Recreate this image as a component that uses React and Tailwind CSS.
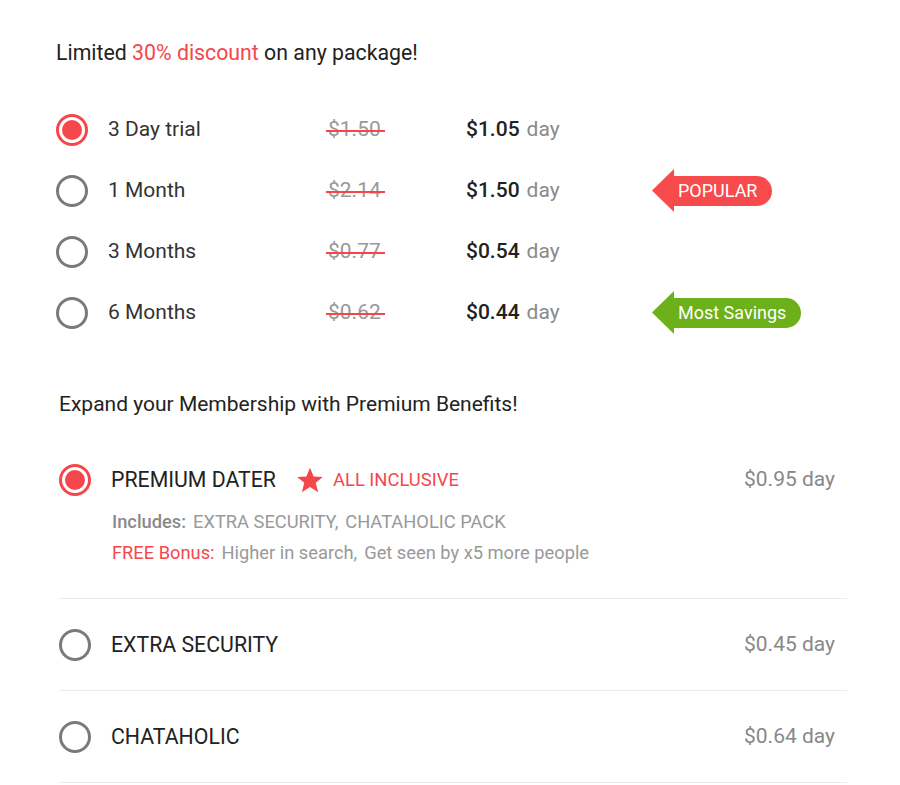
import React, { useState } from "react";

const plans = [
  { id: "trial", label: "3 Day trial", old: "$1.50", price: "$1.05" },
  { id: "1m", label: "1 Month", old: "$2.14", price: "$1.50", badge: "popular" },
  { id: "3m", label: "3 Months", old: "$0.77", price: "$0.54" },
  { id: "6m", label: "6 Months", old: "$0.62", price: "$0.44", badge: "savings" },
];

const extras = [
  { id: "extra", name: "EXTRA SECURITY", price: "$0.45" },
  { id: "chat", name: "CHATAHOLIC", price: "$0.64" },
];

// radio circle, red ring + dot when checked
const Radio = ({ checked }) =>
  checked ? (
    <span className="flex h-8 w-8 shrink-0 items-center justify-center rounded-full border-[3px] border-[#f5474b]">
      <span className="h-[20px] w-[20px] rounded-full bg-[#f5474b]" />
    </span>
  ) : (
    <span className="block h-8 w-8 shrink-0 rounded-full border-[3px] border-[#7a7a7a]" />
  );

const Badge = ({ text, color }) => (
  <div className="flex items-center">
    <svg width="22" height="43" viewBox="0 0 22 43" className="block">
      <polygon points="0,21.5 22,0 22,43" fill={color} />
    </svg>
    <div
      className="flex h-[30px] items-center rounded-r-full pl-[4px] pr-[15px] text-[18px] leading-none text-white"
      style={{ backgroundColor: color }}
    >
      {text}
    </div>
  </div>
);

const Star = () => (
  <svg width="28" height="27" viewBox="0 0 24 23" className="block">
    <polygon
      points="12,0.5 15.1,8 23,8.4 16.9,13.5 19,21.5 12,17 5,21.5 7.1,13.5 1,8.4 8.9,8"
      fill="#f5474b"
    />
  </svg>
);

export default function App() {
  const [plan, setPlan] = useState("trial");
  const [extra, setExtra] = useState("premium");

  return (
    <div className="min-h-[785px] w-[900px] bg-white px-[56px] pt-[39px] font-['Roboto',sans-serif]">
      <h1 className="text-[21.3px] leading-[28px] text-[#222]">
        Limited <span className="text-[#f5474b]">30% discount</span> on any package!
      </h1>

      {/* packages */}
      <div className="mt-[32px]">
        {plans.map((p) => (
          <div
            key={p.id}
            onClick={() => setPlan(p.id)}
            className="flex h-[61px] cursor-pointer items-center"
          >
            <Radio checked={plan === p.id} />
            <span className="ml-[20px] w-[220px] text-[21px] text-[#333]">{p.label}</span>
            <span className="w-[138px] text-[21px]">
              <span className="relative inline-block text-[#999]">
                {p.old}
                <span className="absolute left-[-2px] right-[-4px] top-1/2 h-[2px] bg-[#f5474b]" />
              </span>
            </span>
            <span className="w-[186px] text-[21px]">
              <span className="font-medium text-[#222]">{p.price}</span>
              <span className="ml-[7px] text-[#8a8a8a]">day</span>
            </span>
            {p.badge === "popular" && <Badge text="POPULAR" color="#f64a4c" />}
            {p.badge === "savings" && <Badge text="Most Savings" color="#6cb01a" />}
          </div>
        ))}
      </div>

      {/* premium benefits */}
      <div className="ml-[3px] mr-[-3px] mt-[47px]">
        <h2 className="text-[21px] leading-[28px] text-[#222]">
          Expand your Membership with Premium Benefits!
        </h2>

        <div
          onClick={() => setExtra("premium")}
          className="cursor-pointer border-b border-[#ebebeb] pb-[33px] pt-[46px]"
        >
          <div className="flex h-8 items-center">
            <Radio checked={extra === "premium"} />
            <span className="ml-[20px] text-[21.3px] text-[#222]">PREMIUM DATER</span>
            <span className="ml-[20px]">
              <Star />
            </span>
            <span className="ml-[9px] text-[18.4px] text-[#f5474b]">ALL INCLUSIVE</span>
            <span className="ml-auto mr-[12px] text-[21px] text-[#888]">$0.95 day</span>
          </div>
          <div className="ml-[53px] mt-[14px] text-[18.3px] leading-[24px] text-[#999]">
            <span className="mr-[7px] font-medium text-[#8a8a8a]">Includes:</span>
            EXTRA SECURITY,<span className="ml-[7px]">CHATAHOLIC PACK</span>
          </div>
          <div className="ml-[53px] mt-[7px] text-[18.3px] leading-[24px] text-[#999]">
            <span className="mr-[7px] text-[#f5474b]">FREE Bonus:</span>
            Higher in search,<span className="ml-[7px]">Get seen by x5 more people</span>
          </div>
        </div>

        {extras.map((e) => (
          <div
            key={e.id}
            onClick={() => setExtra(e.id)}
            className="flex h-[92px] cursor-pointer items-center border-b border-[#ebebeb]"
          >
            <Radio checked={extra === e.id} />
            <span className="ml-[20px] text-[21.3px] text-[#222]">{e.name}</span>
            <span className="ml-auto mr-[12px] text-[21px] text-[#888]">{e.price} day</span>
          </div>
        ))}
      </div>
    </div>
  );
}
